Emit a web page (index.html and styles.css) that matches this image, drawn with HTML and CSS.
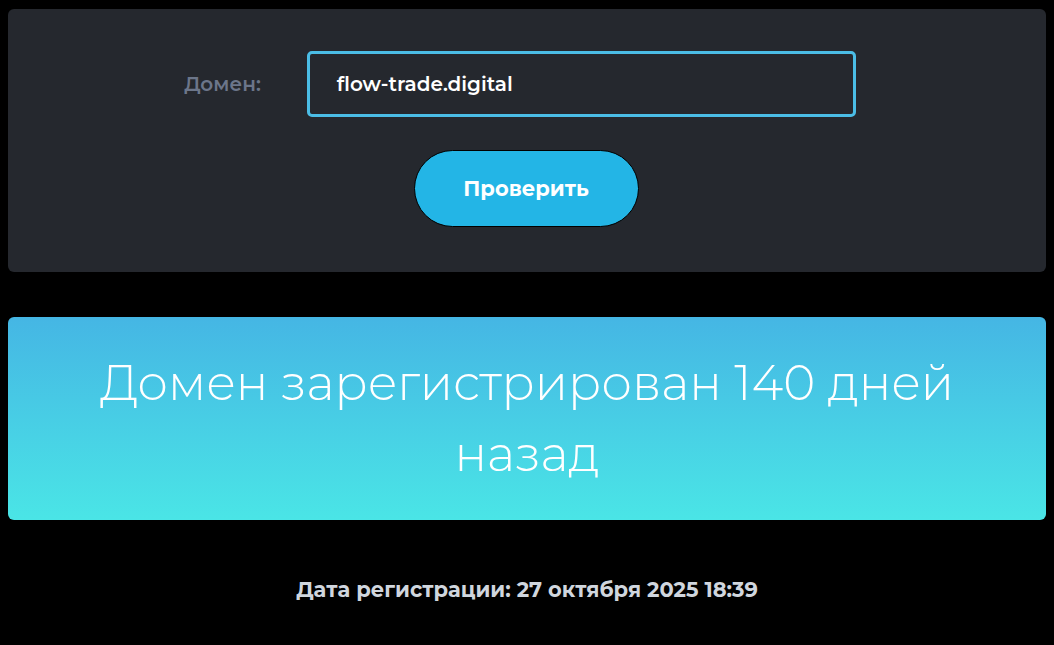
FILE: index.html
```html
<!DOCTYPE html>
<html lang="ru">
<head>
<meta charset="utf-8">
<title>Проверка домена</title>
<link rel="stylesheet" href="styles.css">
</head>
<body>
<section class="panel">
  <div class="row">
    <label class="label" for="domain">Домен:</label>
    <div class="input" id="domain">flow-trade.digital</div>
  </div>
  <button class="btn" type="button">Проверить</button>
</section>
<section class="result">
  <h1 class="result-title">Домен зарегистрирован 140 дней назад</h1>
</section>
<p class="date">Дата регистрации: 27 октября 2025 18:39</p>
</body>
</html>
```
FILE: styles.css
```css
html { background: #000; }
body {
  margin: 8px;
  background: #000;
  font-family: "Montserrat", "DejaVu Sans", sans-serif;
}
.panel {
  margin-top: 1px;
  background: #25282e;
  border-radius: 6px;
  height: 263px;
  box-sizing: border-box;
  padding-top: 42px;
  display: flex;
  flex-direction: column;
  align-items: center;
}
.row {
  display: flex;
  align-items: center;
  gap: 46px;
  margin-left: -14px;
}
.label {
  color: #6c768a;
  font-size: 20px;
  font-weight: 600;
}
.input {
  width: 549px;
  height: 66px;
  box-sizing: border-box;
  border: 3px solid #4bbde6;
  border-radius: 5px;
  padding-left: 27px;
  display: flex;
  align-items: center;
  color: #fff;
  font-size: 20px;
  font-weight: 600;
}
.btn {
  margin-top: 33px;
  margin-left: -2px;
  width: 225px;
  height: 77px;
  border: 1px solid #000;
  border-radius: 40px;
  background: #23b5e6;
  color: #fff;
  font-family: inherit;
  font-size: 21px;
  font-weight: 700;
}
.result {
  margin-top: 45px;
  border-radius: 6px;
  background: linear-gradient(180deg, #45b6e4 0%, #4ae5e6 100%);
  padding: 30px 70px 31px;
  text-align: center;
}
.result-title {
  margin: 0;
  color: #fff;
  font-size: 48.6px;
  font-weight: 300;
  line-height: 71px;
}
.date {
  margin: 57px 0 0;
  text-align: center;
  color: #d0d6de;
  font-size: 21px;
  font-weight: 700;
}
```
